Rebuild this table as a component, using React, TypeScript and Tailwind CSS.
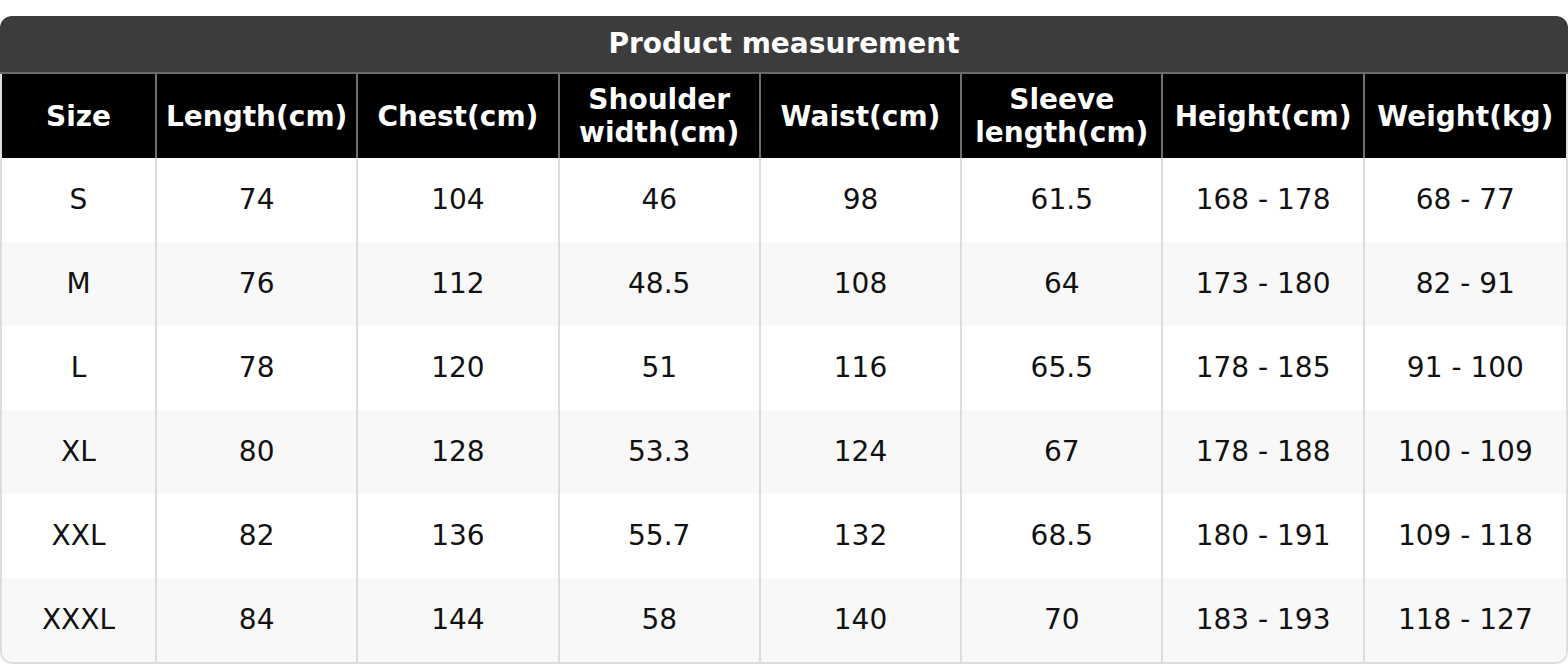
import React from "react";

const headers: string[][] = [
  ["Size"],
  ["Length(cm)"],
  ["Chest(cm)"],
  ["Shoulder", "width(cm)"],
  ["Waist(cm)"],
  ["Sleeve", "length(cm)"],
  ["Height(cm)"],
  ["Weight(kg)"],
];

const rows: string[][] = [
  ["S", "74", "104", "46", "98", "61.5", "168 - 178", "68 - 77"],
  ["M", "76", "112", "48.5", "108", "64", "173 - 180", "82 - 91"],
  ["L", "78", "120", "51", "116", "65.5", "178 - 185", "91 - 100"],
  ["XL", "80", "128", "53.3", "124", "67", "178 - 188", "100 - 109"],
  ["XXL", "82", "136", "55.7", "132", "68.5", "180 - 191", "109 - 118"],
  ["XXXL", "84", "144", "58", "140", "70", "183 - 193", "118 - 127"],
];

export default function App() {
  return (
    <div
      className="w-[1568px] h-[664px] bg-white pt-[16px]"
      style={{ fontFamily: '"DejaVu Sans", "Noto Sans", sans-serif' }}
    >
      <div className="rounded-[12px] overflow-hidden">
        <div className="h-[56px] bg-[#3c3c3c] flex items-center justify-center text-white font-bold text-[28px] leading-none">
          Product measurement
        </div>
        <div className="h-[2px] bg-[#6a6a6a]" />
        <div className="border-x-2 border-b-2 border-[#dddddd] rounded-b-[12px] overflow-hidden">
          <div className="grid grid-cols-[155px_repeat(7,1fr)] bg-black -mx-[2px] px-[2px]">
            {headers.map((h, i) => (
              <div
                key={i}
                className={`h-[84px] flex flex-col items-center justify-center text-white font-bold text-[28px] leading-[33px] text-center ${
                  i < headers.length - 1 ? "border-r-2 border-[#6e6e6e]" : ""
                }`}
              >
                {h.map((line, j) => (
                  <span key={j}>{line}</span>
                ))}
              </div>
            ))}
          </div>
          {rows.map((r, ri) => (
            <div
              key={ri}
              className={`grid grid-cols-[155px_repeat(7,1fr)] ${
                ri % 2 === 1 ? "bg-[#f8f8f8]" : "bg-white"
              }`}
            >
              {r.map((c, ci) => (
                <div
                  key={ci}
                  className={`h-[84px] flex items-center justify-center text-[#111111] text-[28px] leading-none ${
                    ci < r.length - 1 ? "border-r-2 border-[#dddddd]" : ""
                  }`}
                >
                  {c}
                </div>
              ))}
            </div>
          ))}
        </div>
      </div>
    </div>
  );
}
